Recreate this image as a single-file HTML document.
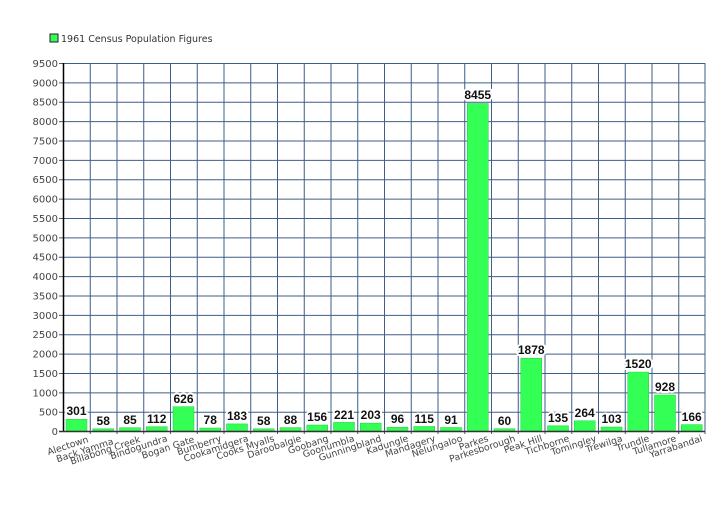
<!DOCTYPE html>
<html><head><meta charset="utf-8"><style>
html,body{margin:0;padding:0;background:#fff;width:715px;height:525px;overflow:hidden}
svg{display:block}
text{font-family:"Comic Sans MS","DejaVu Sans","Liberation Sans",sans-serif}
.y{font-size:10px;fill:#444;text-anchor:end}
.v text{font-family:"Liberation Sans",sans-serif;font-size:12px;font-weight:bold;fill:#111;text-anchor:middle;stroke:#fff;stroke-width:4;paint-order:stroke;stroke-linejoin:round}
.c{font-size:9.3px;fill:#444;text-anchor:end}
</style></head><body>
<svg width="715" height="525" xmlns="http://www.w3.org/2000/svg">
<rect x="50" y="34" width="8" height="8" fill="#33ff55" stroke="#222" stroke-width="1"/>
<text x="61" y="42" style="font-size:9.5px;fill:#333">1961 Census Population Figures</text>
<g stroke="#3d5f8a" stroke-width="1">
<line x1="59" y1="63.5" x2="705" y2="63.5"/><line x1="59" y1="82.9" x2="705" y2="82.9"/><line x1="59" y1="102.2" x2="705" y2="102.2"/><line x1="59" y1="121.6" x2="705" y2="121.6"/><line x1="59" y1="141" x2="705" y2="141"/><line x1="59" y1="160.4" x2="705" y2="160.4"/><line x1="59" y1="179.7" x2="705" y2="179.7"/><line x1="59" y1="199.1" x2="705" y2="199.1"/><line x1="59" y1="218.5" x2="705" y2="218.5"/><line x1="59" y1="237.9" x2="705" y2="237.9"/><line x1="59" y1="257.2" x2="705" y2="257.2"/><line x1="59" y1="276.6" x2="705" y2="276.6"/><line x1="59" y1="296" x2="705" y2="296"/><line x1="59" y1="315.4" x2="705" y2="315.4"/><line x1="59" y1="334.7" x2="705" y2="334.7"/><line x1="59" y1="354.1" x2="705" y2="354.1"/><line x1="59" y1="373.5" x2="705" y2="373.5"/><line x1="59" y1="392.9" x2="705" y2="392.9"/><line x1="59" y1="412.2" x2="705" y2="412.2"/>
<line x1="90.25" y1="63" x2="90.25" y2="434"/><line x1="117" y1="63" x2="117" y2="434"/><line x1="143.75" y1="63" x2="143.75" y2="434"/><line x1="170.5" y1="63" x2="170.5" y2="434"/><line x1="197.25" y1="63" x2="197.25" y2="434"/><line x1="224" y1="63" x2="224" y2="434"/><line x1="250.75" y1="63" x2="250.75" y2="434"/><line x1="277.5" y1="63" x2="277.5" y2="434"/><line x1="304.25" y1="63" x2="304.25" y2="434"/><line x1="331" y1="63" x2="331" y2="434"/><line x1="357.75" y1="63" x2="357.75" y2="434"/><line x1="384.5" y1="63" x2="384.5" y2="434"/><line x1="411.25" y1="63" x2="411.25" y2="434"/><line x1="438" y1="63" x2="438" y2="434"/><line x1="464.75" y1="63" x2="464.75" y2="434"/><line x1="491.5" y1="63" x2="491.5" y2="434"/><line x1="518.25" y1="63" x2="518.25" y2="434"/><line x1="545" y1="63" x2="545" y2="434"/><line x1="571.75" y1="63" x2="571.75" y2="434"/><line x1="598.5" y1="63" x2="598.5" y2="434"/><line x1="625.25" y1="63" x2="625.25" y2="434"/><line x1="652" y1="63" x2="652" y2="434"/><line x1="678.75" y1="63" x2="678.75" y2="434"/><line x1="705" y1="63" x2="705" y2="434"/>
</g>
<g fill="#33ff55" stroke="#22cc44" stroke-width="0.5">
<rect x="66" y="419.3" width="21" height="11.7"/><rect x="92.75" y="428.8" width="21" height="2.2"/><rect x="119.5" y="427.7" width="21" height="3.3"/><rect x="146.25" y="426.7" width="21" height="4.3"/><rect x="173" y="406.7" width="21" height="24.3"/><rect x="199.75" y="428" width="21" height="3"/><rect x="226.5" y="423.9" width="21" height="7.1"/><rect x="253.25" y="428.8" width="21" height="2.2"/><rect x="280" y="427.6" width="21" height="3.4"/><rect x="306.75" y="425" width="21" height="6"/><rect x="333.5" y="422.4" width="21" height="8.6"/><rect x="360.25" y="423.1" width="21" height="7.9"/><rect x="387" y="427.3" width="21" height="3.7"/><rect x="413.75" y="426.5" width="21" height="4.5"/><rect x="440.5" y="427.5" width="21" height="3.5"/><rect x="467.25" y="103.5" width="21" height="327.5"/><rect x="494" y="428.7" width="21" height="2.3"/><rect x="520.75" y="358.2" width="21" height="72.8"/><rect x="547.5" y="425.8" width="21" height="5.2"/><rect x="574.25" y="420.8" width="21" height="10.2"/><rect x="601" y="427" width="21" height="4"/><rect x="627.75" y="372.1" width="21" height="58.9"/><rect x="654.5" y="395" width="21" height="36"/><rect x="681.25" y="424.6" width="21" height="6.4"/>
</g>
<line x1="63.5" y1="63" x2="63.5" y2="432" stroke="#000" stroke-width="1.5"/>
<line x1="59" y1="431.5" x2="705" y2="431.5" stroke="#333" stroke-width="1.5"/>
<g class="y">
<text x="58" y="67">9500</text><text x="58" y="86.4">9000</text><text x="58" y="105.7">8500</text><text x="58" y="125.1">8000</text><text x="58" y="144.5">7500</text><text x="58" y="163.9">7000</text><text x="58" y="183.2">6500</text><text x="58" y="202.6">6000</text><text x="58" y="222">5500</text><text x="58" y="241.4">5000</text><text x="58" y="260.7">4500</text><text x="58" y="280.1">4000</text><text x="58" y="299.5">3500</text><text x="58" y="318.9">3000</text><text x="58" y="338.2">2500</text><text x="58" y="357.6">2000</text><text x="58" y="377">1500</text><text x="58" y="396.4">1000</text><text x="58" y="415.7">500</text><text x="58" y="435">0</text>
</g>
<g class="v">
<text x="76.5" y="415">301</text><text x="103.2" y="425">58</text><text x="130" y="424">85</text><text x="156.7" y="423">112</text><text x="183.5" y="403">626</text><text x="210.2" y="424">78</text><text x="237" y="420">183</text><text x="263.7" y="425">58</text><text x="290.5" y="424">88</text><text x="317.2" y="421">156</text><text x="344" y="419">221</text><text x="370.7" y="419">203</text><text x="397.5" y="423">96</text><text x="424.2" y="423">115</text><text x="451" y="424">91</text><text x="477.7" y="99">8455</text><text x="504.5" y="425">60</text><text x="531.2" y="354">1878</text><text x="558" y="422">135</text><text x="584.7" y="417">264</text><text x="611.5" y="423">103</text><text x="638.2" y="368">1520</text><text x="665" y="391">928</text><text x="691.7" y="421">166</text>
</g>
<g class="c">
<text transform="translate(89,442) rotate(-18)">Alectown</text>
<text transform="translate(114,444) rotate(-18)">Back Yamma</text>
<text transform="translate(141,442) rotate(-18)">Billabong Creek</text>
<text transform="translate(168,441) rotate(-18)">Bindogundra</text>
<text transform="translate(195,442) rotate(-18)">Bogan Gate</text>
<text transform="translate(222,441) rotate(-18)">Bumberry</text>
<text transform="translate(249,441) rotate(-18)">Cookamidgera</text>
<text transform="translate(275,441) rotate(-18)">Cooks Myalls</text>
<text transform="translate(302,441) rotate(-18)">Daroobalgie</text>
<text transform="translate(329,441) rotate(-18)">Goobang</text>
<text transform="translate(355,441) rotate(-18)">Goonumbla</text>
<text transform="translate(382,441) rotate(-18)">Gunningbland</text>
<text transform="translate(409,441) rotate(-18)">Kadungle</text>
<text transform="translate(436,441) rotate(-18)">Mandagery</text>
<text transform="translate(463,441) rotate(-18)">Nelungaloo</text>
<text transform="translate(489,441) rotate(-18)">Parkes</text>
<text transform="translate(516,441) rotate(-18)">Parkesborough</text>
<text transform="translate(543,441) rotate(-18)">Peak Hill</text>
<text transform="translate(570,441) rotate(-18)">Tichborne</text>
<text transform="translate(597,441) rotate(-18)">Tomingley</text>
<text transform="translate(623,441) rotate(-18)">Trewilga</text>
<text transform="translate(650,441) rotate(-18)">Trundle</text>
<text transform="translate(677,441) rotate(-18)">Tullamore</text>
<text transform="translate(703,441) rotate(-18)">Yarrabandai</text>
</g>
</svg>
</body></html>
